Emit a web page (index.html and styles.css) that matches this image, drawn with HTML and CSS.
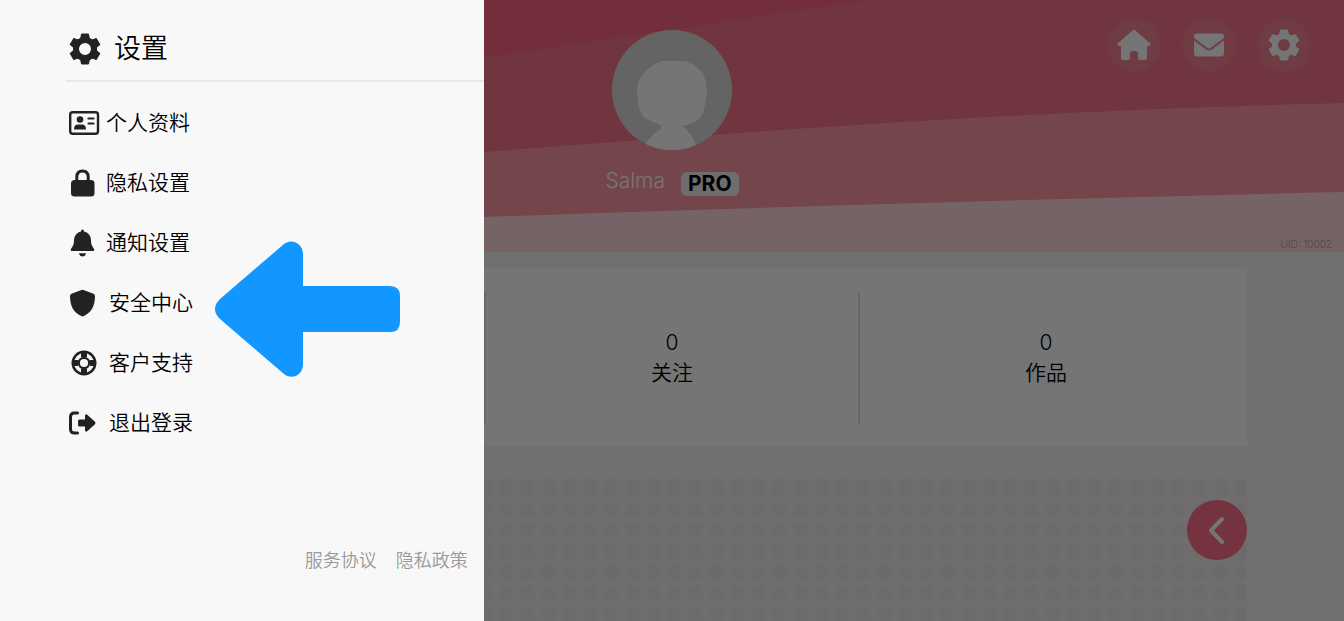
FILE: index.html
```html
<!DOCTYPE html>
<html lang="zh-CN">
<head>
<meta charset="utf-8">
<meta name="viewport" content="width=device-width, initial-scale=1">
<title>设置</title>
<link rel="stylesheet" href="styles.css">
</head>
<body>
<svg class="defs" aria-hidden="true">
  <symbol id="gear" viewBox="0 0 34 34">
    <circle cx="17" cy="17" r="9" fill="none" stroke="currentColor" stroke-width="6"/>
    <g fill="currentColor" stroke="currentColor" stroke-linejoin="round" stroke-width="1">
      <path d="M13.500 2h7l1 5.500h-9z"/>
      <path d="M13.500 2h7l1 5.500h-9z" transform="rotate(60 17 17)"/>
      <path d="M13.500 2h7l1 5.500h-9z" transform="rotate(120 17 17)"/>
      <path d="M13.500 2h7l1 5.500h-9z" transform="rotate(180 17 17)"/>
      <path d="M13.500 2h7l1 5.500h-9z" transform="rotate(240 17 17)"/>
      <path d="M13.500 2h7l1 5.500h-9z" transform="rotate(300 17 17)"/>
    </g>
  </symbol>
</svg>

<div class="page">
  <header class="hero">
    <svg class="bands" viewBox="0 0 1344 252" preserveAspectRatio="none" aria-hidden="true">
      <rect class="band-four" width="1344" height="252"/>
      <path class="band-three" d="M0 0H1344V192Q914 202 484 217L0 235Z"/>
      <path class="band-two" d="M0 0H1344V103C1140 108 914 118 484 152L0 194Z"/>
      <path class="band-one" d="M0 0H870Q680 28 484 58L0 135Z"/>
    </svg>
    <nav class="shortcuts" aria-label="快捷入口">
      <a class="round" href="#home" aria-label="首页"><svg class="icon" viewBox="0 0 34 34" fill="currentColor"><path d="M15.500 2.500Q17 1.200 18.500 2.500L33 15.200Q34.500 17 32.200 18H30V29.500Q30 32 27.500 32H23Q21 32 21 30V25Q21 23 19 23H15Q13 23 13 25V30Q13 32 11 32H6.500Q4 32 4 29.500V18H1.800Q-.5 17 1 15.200Z"/></svg></a>
      <a class="round" href="#mail" aria-label="消息"><svg class="icon" viewBox="0 0 34 34" fill="currentColor"><path d="M5 5.500H29Q32 5.500 32 8.500V10L18.500 20Q17 21 15.500 20L2 10V8.500Q2 5.500 5 5.500ZM2 12.500L14.500 21.700Q17 23.200 19.500 21.700L32 12.500V25Q32 28.500 28.500 28.500H5.500Q2 28.500 2 25Z"/></svg></a>
      <a class="round" href="#settings" aria-label="设置"><svg class="icon"><use href="#gear"/></svg></a>
    </nav>
    <div class="profile">
      <svg class="avatar" viewBox="0 0 120 120" role="img" aria-label="头像">
        <clipPath id="disc"><circle cx="60" cy="60" r="60"/></clipPath>
        <g clip-path="url(#disc)">
          <rect class="avatar-back" width="120" height="120"/>
          <path class="avatar-figure" d="M50 31H73L80 34Q91 40 94 52L95 62L93 75Q90 91 78 94L70 96Q79 102 84 115V120H33V115Q39 105 46 101Q51 98 48 95L41 92L33 88Q27 82 26 72L25 58Q26 49 35 40L43 34Z"/>
        </g>
      </svg>
      <div class="identity"><span class="name">Salma</span><strong class="badge">PRO</strong></div>
    </div>
    <span class="uid">UID: 10002</span>
  </header>
  <main class="content">
    <section class="stats">
      <div class="stat"><span>0</span><span>粉丝</span></div>
      <div class="stat"><span>0</span><span>关注</span></div>
      <div class="stat"><span>0</span><span>作品</span></div>
    </section>
    <section class="gallery">
      <button class="back" type="button" aria-label="返回"><svg class="icon" viewBox="0 0 34 34" fill="none" stroke="currentColor" stroke-width="4" stroke-linecap="round" stroke-linejoin="round"><path d="M22 6L11 17.500L22 29"/></svg></button>
    </section>
  </main>
</div>
<div class="shade"></div>

<aside class="drawer">
  <h1 class="title"><svg class="title-icon"><use href="#gear"/></svg>设置</h1>
  <nav class="menu" aria-label="设置">
    <a class="item" href="#profile"><svg class="icon" viewBox="0 0 34 34" fill="currentColor"><rect x="4.200" y="6.200" width="27.800" height="21.600" rx="2.500" fill="none" stroke="currentColor" stroke-width="2.400"/><circle cx="14" cy="13.500" r="3.300"/><path d="M8 23.500Q8 18.500 12 18.500H16Q20 18.500 20 23.500Z"/><path d="M22.500 12.500H27.500M22.500 17.500H27.500" stroke="currentColor" stroke-width="2.200" stroke-linecap="round"/></svg>个人资料</a>
    <a class="item" href="#privacy"><svg class="icon" viewBox="0 0 34 34" fill="currentColor"><rect x="5" y="14" width="23.500" height="16.500" rx="3.500"/><path d="M10.800 16V11Q10.800 5 16.500 5T22.200 11V16" fill="none" stroke="currentColor" stroke-width="3"/></svg>隐私设置</a>
    <a class="item" href="#notice"><svg class="icon" viewBox="0 0 34 34" fill="currentColor"><path d="M15 5.500Q15 3.500 16.500 3.500T18 5.500Q24.500 7 25 14C25 19 26.500 20.500 28 23Q29 25 27 25H6Q4 25 5 23C6.500 20.500 8 19 8 14Q8.500 7 15 5.500ZM13 27.200H20Q19.500 30.500 16.500 30.500T13 27.200Z"/></svg>通知设置</a>
    <a class="item item-wide" href="#security"><svg class="icon" viewBox="0 0 34 34" fill="currentColor"><path d="M15.500 4Q16.500 3.500 17.500 4L27.500 7.800Q29 8.500 29 10C29 20 25.500 26.500 17.800 30Q16.500 30.800 15.200 30C7.500 26.500 4 20 4 10Q4 8.500 5.500 7.800Z"/></svg>安全中心</a>
    <a class="item item-wide" href="#support"><svg class="icon" viewBox="0 0 34 34" fill="none" stroke="currentColor"><circle cx="18" cy="17" r="11.200" stroke-width="2.600"/><circle cx="18" cy="17" r="5.200" stroke-width="2.200"/><path d="M18 5V11M18 23V29M6 17H12M24 17H30" stroke-width="6"/></svg>客户支持</a>
    <a class="item item-wide" href="#logout"><svg class="icon" viewBox="0 0 34 34" fill="currentColor"><path d="M11.500 7H8.500Q4.500 7 4.500 11V23Q4.500 27 8.500 27H11.500" fill="none" stroke="currentColor" stroke-width="3" stroke-linecap="round"/><path d="M13.500 13.500H19V9.500Q19.500 7.500 21.500 9L29 15.800Q30 17 29 18.200L21.500 25Q19.500 26.500 19 24.500V20.500H13.500Q12 20.500 12 19V15Q12 13.500 13.500 13.500Z"/></svg>退出登录</a>
  </nav>
  <footer class="legal"><a href="#terms">服务协议</a><a href="#policy">隐私政策</a></footer>
  <svg class="pointer" viewBox="0 0 185 136" aria-hidden="true"><path d="M69 3C76-3 88 2 88 13V45H175Q185 45 185 55V81Q185 91 175 91H88V123C88 135 76 139 69 133L5 78Q-5 68 5 58Z"/></svg>
</aside>
</body>
</html>
```
FILE: styles.css
```css
* { box-sizing: border-box; }

body {
  margin: 0;
  background: #f5f5f5;
  color: #000;
  font-family: Inter, "Noto Sans CJK SC", sans-serif;
  font-weight: 350;
  font-size: 21px;
  line-height: 30px;
}

a { color: inherit; text-decoration: none; }
svg { display: block; flex: none; }
.defs { position: absolute; width: 0; height: 0; }
.icon { width: 34px; height: 34px; }

.page { height: 100vh; overflow: hidden; display: flex; flex-direction: column; }

.hero { position: relative; flex: none; padding: 30px 12px 0; height: 252px; }
.bands { position: absolute; inset: 0; width: 100%; height: 100%; }
.band-one { fill: #f86680; }
.band-two { fill: #f47589; }
.band-three { fill: #fc98a3; }
.band-four { fill: #ffd7dc; }

.shortcuts { position: absolute; top: 15px; right: 30px; display: flex; gap: 15px; color: #fff; }
.round {
  display: grid;
  place-items: center;
  width: 60px;
  height: 60px;
  border-radius: 50%;
  background: radial-gradient(circle closest-side, rgba(255, 255, 255, .1) 75%, rgba(255, 255, 255, 0));
}

.profile { position: relative; display: flex; flex-direction: column; align-items: center; gap: 16px; }
.avatar { width: 120px; height: 120px; }
.avatar-back { fill: #dadada; }
.avatar-figure { fill: #fff; }
.identity { display: flex; align-items: flex-end; gap: 16px; color: #fff; }
.name { font-weight: 300; }
.badge {
  padding: 0 7px;
  border-radius: 6px;
  background: #f0f0f0;
  color: #000;
  font-weight: 700;
  line-height: 24px;
}
.uid { position: absolute; right: 12px; bottom: 0; font-size: 10px; line-height: 16px; color: #bf9ca3; }

.content { flex: 1; display: flex; flex-direction: column; gap: 32px; width: 100%; max-width: 1182px; margin: 0 auto; padding: 16px 16px 0; }
.stats { display: grid; grid-template-columns: repeat(3, 1fr); padding: 24px 15px 22px 13px; background: #fff; }
.stat { display: flex; flex-direction: column; align-items: center; justify-content: center; height: 132px; }
.stat + .stat { border-left: 2px solid #e0e0e0; }

.gallery {
  flex: 1;
  display: flex;
  justify-content: flex-end;
  align-items: flex-start;
  padding-top: 22px;
  background: radial-gradient(circle, #ece6e8 3px, #f2edef 10px) 0 0 / 21px 21px;
}
.back {
  display: grid;
  place-items: center;
  width: 60px;
  height: 60px;
  padding: 0;
  border: 0;
  border-radius: 50%;
  background: #ff7089;
  color: #fff;
}

.shade { position: fixed; inset: 0; background: rgba(0, 0, 0, .54); }

.drawer {
  position: fixed;
  inset: 0 auto 0 0;
  width: 36%;
  padding: 18px 0 45px 66px;
  display: flex;
  flex-direction: column;
  background: #f8f8f8;
}
.title {
  display: flex;
  align-items: center;
  gap: 12px;
  margin: 0;
  padding-left: 2px;
  height: 64px;
  border-bottom: 2px solid #e8e8e8;
  font-size: 27px;
  font-weight: 350;
}
.title-icon { width: 34px; height: 34px; color: #222; }
.menu { display: flex; flex-direction: column; padding-top: 11px; }
.item { display: flex; align-items: center; gap: 6px; height: 60px; }
.item-wide { gap: 9px; }
.item .icon { color: #222; }
.legal { display: flex; justify-content: flex-end; gap: 19px; margin-top: auto; padding-right: 16px; font-size: 18px; color: #999; }
.pointer { position: absolute; left: 215px; top: 241px; width: 185px; height: 136px; fill: #1296ff; }
```
